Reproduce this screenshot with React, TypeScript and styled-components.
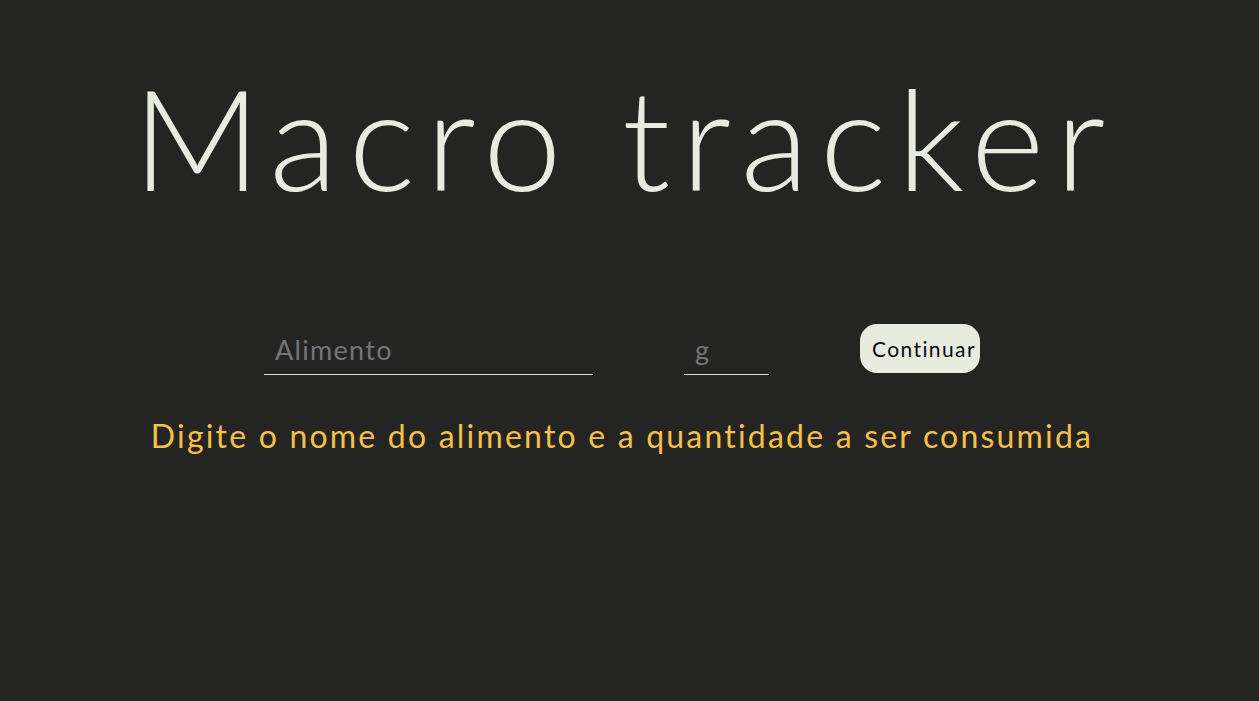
import React from "react";
import styled, { createGlobalStyle } from "styled-components";

const GlobalStyle = createGlobalStyle`
  html, body {
    margin: 0;
    padding: 0;
    background: #242422;
  }
  body {
    font-family: "Lato", "Open Sans", sans-serif;
    font-weight: 300;
  }
  * { box-sizing: border-box; }
`;

const Page = styled.main`
  min-height: 100vh;
  background: #242422;
  padding: 0 15px 0 0;
  display: flex;
  flex-direction: column;
  align-items: center;
`;

const Title = styled.h1`
  margin: 52px 0 0;
  font-family: "Lato", sans-serif;
  font-weight: 300;
  font-size: 141px;
  line-height: 1.2;
  letter-spacing: 11px;
  text-indent: 5px;
  color: #e8ecdf;
  text-align: center;
`;

const Form = styled.form`
  margin-top: 103px;
  display: flex;
  align-items: flex-end;
  gap: 91px;
`;

const Field = styled.input<{ $width: number }>`
  width: ${(p) => p.$width}px;
  height: 50px;
  padding: 0 11px 1px;
  background: transparent;
  border: none;
  border-bottom: 1px solid #d8dccf;
  outline: none;
  color: #e8ecdf;
  font-family: "Lato", sans-serif;
  font-weight: 400;
  font-size: 27px;
  letter-spacing: 1.3px;
  &::placeholder {
    color: #74747a;
  }
`;

const Button = styled.button`
  width: 120px;
  height: 49px;
  margin-bottom: 2px;
  padding: 0 0 0 8px;
  border: none;
  border-radius: 17px;
  background: #e8ecdf;
  color: #0a0a14;
  font-family: "Lato", sans-serif;
  font-weight: 400;
  font-size: 21px;
  letter-spacing: 1.4px;
  cursor: pointer;
`;

const Message = styled.p`
  margin: 41px 0 0;
  font-family: "Lato", sans-serif;
  font-weight: 400;
  font-size: 32px;
  letter-spacing: 2.2px;
  color: #f5c04a;
  text-align: center;
`;

export default function App() {
  return (
    <>
      <GlobalStyle />
      <Page>
        <Title>Macro tracker</Title>
        <Form onSubmit={(e) => e.preventDefault()}>
          <Field $width={329} placeholder="Alimento" />
          <Field $width={85} placeholder="g" />
          <Button type="submit">Continuar</Button>
        </Form>
        <Message>Digite o nome do alimento e a quantidade a ser consumida</Message>
      </Page>
    </>
  );
}
